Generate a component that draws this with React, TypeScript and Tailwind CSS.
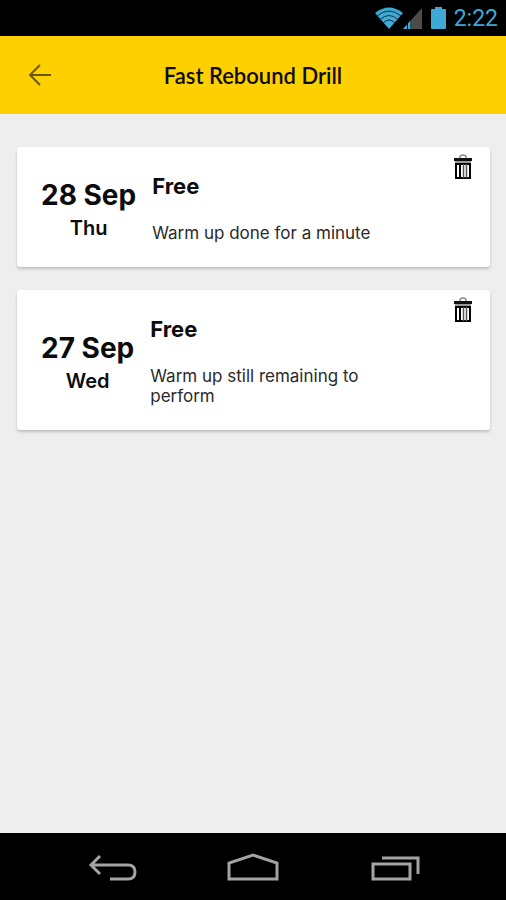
type Session = {
  date: string;
  day: string;
  title: string;
  note: string;
};

const sessions: Session[] = [
  { date: "28 Sep", day: "Thu", title: "Free", note: "Warm up done for a minute" },
  { date: "27 Sep", day: "Wed", title: "Free", note: "Warm up still remaining to perform" },
];

function StatusBar() {
  return (
    <div className="flex h-9 items-center justify-end bg-black pr-2 text-[#3fa9d6]">
      <svg width="28" height="22" viewBox="0 0 28 22" aria-hidden="true">
        <path d="M0 6 Q14 -5 28 6 L14 22 Z" fill="currentColor" />
        <path
          d="M2 9 Q14 -1 26 9 M5 12.500 Q14 4.500 23 12.500 M8 16 Q14 10 20 16"
          fill="none"
          stroke="#0c3444"
          strokeWidth="1"
        />
      </svg>
      <svg width="20" height="22" viewBox="0 0 20 22" aria-hidden="true">
        <path d="M0 22 L19 1 V22 Z" fill="#4d4a4a" />
        <path d="M0 22 L9 12 V22 Z" fill="currentColor" />
        <path d="M4.500 12V22M8 12V22" stroke="#000" strokeWidth="1" />
      </svg>
      <svg className="ml-2" width="15" height="22" viewBox="0 0 15 22" aria-hidden="true">
        <path d="M4 0h7v2h3q1 0 1 1v18q0 1-1 1H1q-1 0-1-1V3q0-1 1-1h3z" fill="currentColor" />
      </svg>
      <time className="ml-2 pt-px font-[Roboto,sans-serif] text-[23px] leading-9">2:22</time>
    </div>
  );
}

function TrashIcon() {
  return (
    <svg width="18" height="26" viewBox="0 0 18 26" aria-hidden="true">
      <path d="M6 4V3q0-2 3-2t3 2v1" fill="none" stroke="#888" strokeWidth="1.500" />
      <path d="M0 4h18v3H0z" fill="#111" />
      <path d="M1 7h16v2H1z" fill="#999" />
      <path d="M2 10h14v14H2z" fill="#fff" stroke="#000" strokeWidth="2" />
      <path d="M6 10v14" stroke="#000" strokeWidth="2" />
      <path d="M9.500 10v14M12.500 10v14" stroke="#555" strokeWidth="1.500" />
    </svg>
  );
}

function SessionCard({ date, day, title, note }: Session) {
  return (
    <li className="flex items-start rounded-[3px] bg-white pr-[18px] pb-6 pl-6 shadow-[0_2px_3px_rgba(0,0,0,0.2)]">
      <div className="mt-[30px] shrink-0 self-center text-center">
        <p className="text-[28px] leading-9 font-bold">{date}</p>
        <p className="text-xl leading-[30px] font-semibold">{day}</p>
      </div>
      <div className="ml-4 min-w-0 flex-1 pt-[23px]">
        <h2 className="text-[22px] leading-8 font-bold">{title}</h2>
        <p className="mt-[21px] max-w-[240px] text-[17px] leading-5 text-[#2a2a2a]">{note}</p>
      </div>
      <button type="button" aria-label={`Delete ${date}`} className="mt-[7px]">
        <TrashIcon />
      </button>
    </li>
  );
}

function NavigationBar() {
  return (
    <nav className="flex h-[67px] items-center justify-between bg-black px-[85px] text-[#a3a3a3]">
      <button type="button" aria-label="Back">
        <svg width="56" height="32" viewBox="0 0 56 32" fill="none" stroke="currentColor" strokeWidth="3" aria-hidden="true">
          <path d="M15 5L6 14L15 23M6 14H43Q50 14 50 21Q50 28 43 28H25" />
        </svg>
      </button>
      <button type="button" aria-label="Home">
        <svg width="56" height="32" viewBox="0 0 56 32" fill="none" stroke="currentColor" strokeWidth="3" aria-hidden="true">
          <path d="M4 28V12L28 4L52 12V28Z" />
        </svg>
      </button>
      <button type="button" aria-label="Recent apps">
        <svg width="56" height="32" viewBox="0 0 56 32" fill="none" stroke="currentColor" strokeWidth="3" aria-hidden="true">
          <path d="M8 13H45V28H8ZM17 7H53V23" />
        </svg>
      </button>
    </nav>
  );
}

export default function App() {
  return (
    <div className="flex min-h-screen flex-col bg-[#eeeeee] font-[Inter,sans-serif] text-[#0c0c0c]">
      <StatusBar />
      <header className="grid h-[78px] grid-cols-[80px_1fr_80px] items-center bg-[#ffd000]">
        <button type="button" aria-label="Go back" className="justify-self-center">
          <svg width="24" height="24" viewBox="0 0 24 24" fill="none" stroke="#6b5700" strokeWidth="2" aria-hidden="true">
            <path d="M12 2L2 12L12 22M2 12H23" />
          </svg>
        </button>
        <h1 className="pt-0.5 text-center font-[Lato,sans-serif] text-[22px] leading-8 font-semibold">Fast Rebound Drill</h1>
      </header>
      <main className="flex-1 pt-[33px] pr-4 pl-[17px]">
        <ul className="flex flex-col gap-[23px]">
          {sessions.map((session) => (
            <SessionCard key={session.date} {...session} />
          ))}
        </ul>
      </main>
      <NavigationBar />
    </div>
  );
}
